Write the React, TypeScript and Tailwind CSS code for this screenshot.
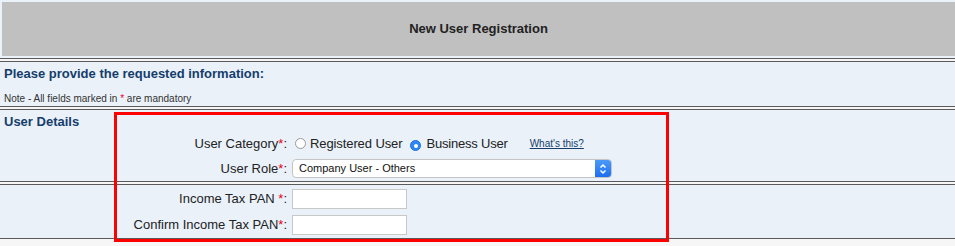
import { useState } from "react";

function Req() {
  return <span className="text-[#e8001c]">*</span>;
}

function Radio({ checked, onClick }: { checked: boolean; onClick: () => void }) {
  return (
    <span
      onClick={onClick}
      className={
        checked
          ? "inline-flex items-center justify-center w-[11px] h-[11px] rounded-full bg-[#2f86f6] border border-[#1f6fe0]"
          : "inline-flex items-center justify-center w-[11px] h-[11px] rounded-full bg-white border border-[#9a9a9a]"
      }
    >
      {checked && <span className="w-[4px] h-[4px] rounded-full bg-white" />}
    </span>
  );
}

function Separator() {
  return <div className="h-[4px] border-t border-b border-[#5a5a5a]" />;
}

export default function App() {
  const [category, setCategory] = useState("business");

  return (
    <div className="relative w-[955px] h-[246px] overflow-hidden bg-[#f6f6f6] font-['Liberation_Sans',Helvetica,Arial,sans-serif]">
      <div className="bg-[#eaf1f9] pt-[2px] pl-[2px] pb-[2px]">
        <div className="h-[54px] bg-[#c0c0c0] flex items-center justify-center text-[13px] font-bold text-[#222]">
          New User Registration
        </div>
      </div>
      <Separator />

      <div className="h-[44px] bg-[#eaf1f9] px-[4px] pt-[4px]">
        <div className="text-[13px] font-bold text-[#153d6b] leading-[16px]">
          Please provide the requested information:
        </div>
        <div className="mt-[11px] text-[10px] text-[#333] leading-[12px]">
          Note - All fields marked in <Req /> are mandatory
        </div>
      </div>
      <Separator />

      <div className="h-[71px] bg-[#eaf1f9] flex">
        <div className="w-[115px] pl-[4px] pt-[4px] text-[13px] font-bold text-[#153d6b] leading-[16px]">
          User Details
        </div>
        <div className="pt-[21px] text-[13px] text-[#222]">
          <div className="h-[25px] flex items-center">
            <div className="w-[172px] text-right">
              User Category<Req />:
            </div>
            <div className="ml-[8px] flex items-center">
              <Radio checked={category === "registered"} onClick={() => setCategory("registered")} />
              <span className="ml-[4px] tracking-[-0.1px]">Registered User</span>
              <span className="ml-[8px]">
                <Radio checked={category === "business"} onClick={() => setCategory("business")} />
              </span>
              <span className="ml-[5px] tracking-[-0.2px]">Business User</span>
              <a href="#" className="ml-[22px] text-[10px] text-[#153d6b] underline">
                What's this?
              </a>
            </div>
          </div>
          <div className="h-[25px] flex items-center">
            <div className="w-[172px] text-right">
              User Role<Req />:
            </div>
            <div className="ml-[5px] w-[320px] h-[19px] flex bg-white border border-[#c4c4c4] rounded-[4px] overflow-hidden">
              <div className="flex-1 pl-[6px] text-[11px] leading-[17px] text-[#111]">
                Company User - Others
              </div>
              <div className="w-[16px] bg-gradient-to-b from-[#4b9af8] to-[#1c6ff0] flex items-center justify-center">
                <svg width="8" height="12" viewBox="0 0 8 12" fill="none" stroke="white" strokeWidth="1.5">
                  <path d="M1.5 4.5 L4 2 L6.5 4.5" />
                  <path d="M1.5 7.5 L4 10 L6.5 7.5" />
                </svg>
              </div>
            </div>
          </div>
        </div>
      </div>
      <Separator />

      <div className="h-[54px] bg-[#eaf1f9] flex border-b border-[#5a5a5a]">
        <div className="w-[115px]" />
        <div className="pt-[4px] text-[13px] text-[#222]">
          <div className="h-[20px] flex items-center">
            <div className="w-[172px] text-right">
              Income Tax PAN <Req />:
            </div>
            <input className="ml-[5px] w-[115px] h-[20px] bg-white border border-[#c8c8c8] outline-none" />
          </div>
          <div className="mt-[6px] h-[20px] flex items-center">
            <div className="w-[172px] text-right">
              Confirm Income Tax PAN<Req />:
            </div>
            <input className="ml-[5px] w-[115px] h-[20px] bg-white border border-[#c8c8c8] outline-none" />
          </div>
        </div>
      </div>

      <div className="absolute left-[114px] top-[112px] w-[555px] h-[130px] border-[3px] border-[#f00] pointer-events-none" />
    </div>
  );
}
